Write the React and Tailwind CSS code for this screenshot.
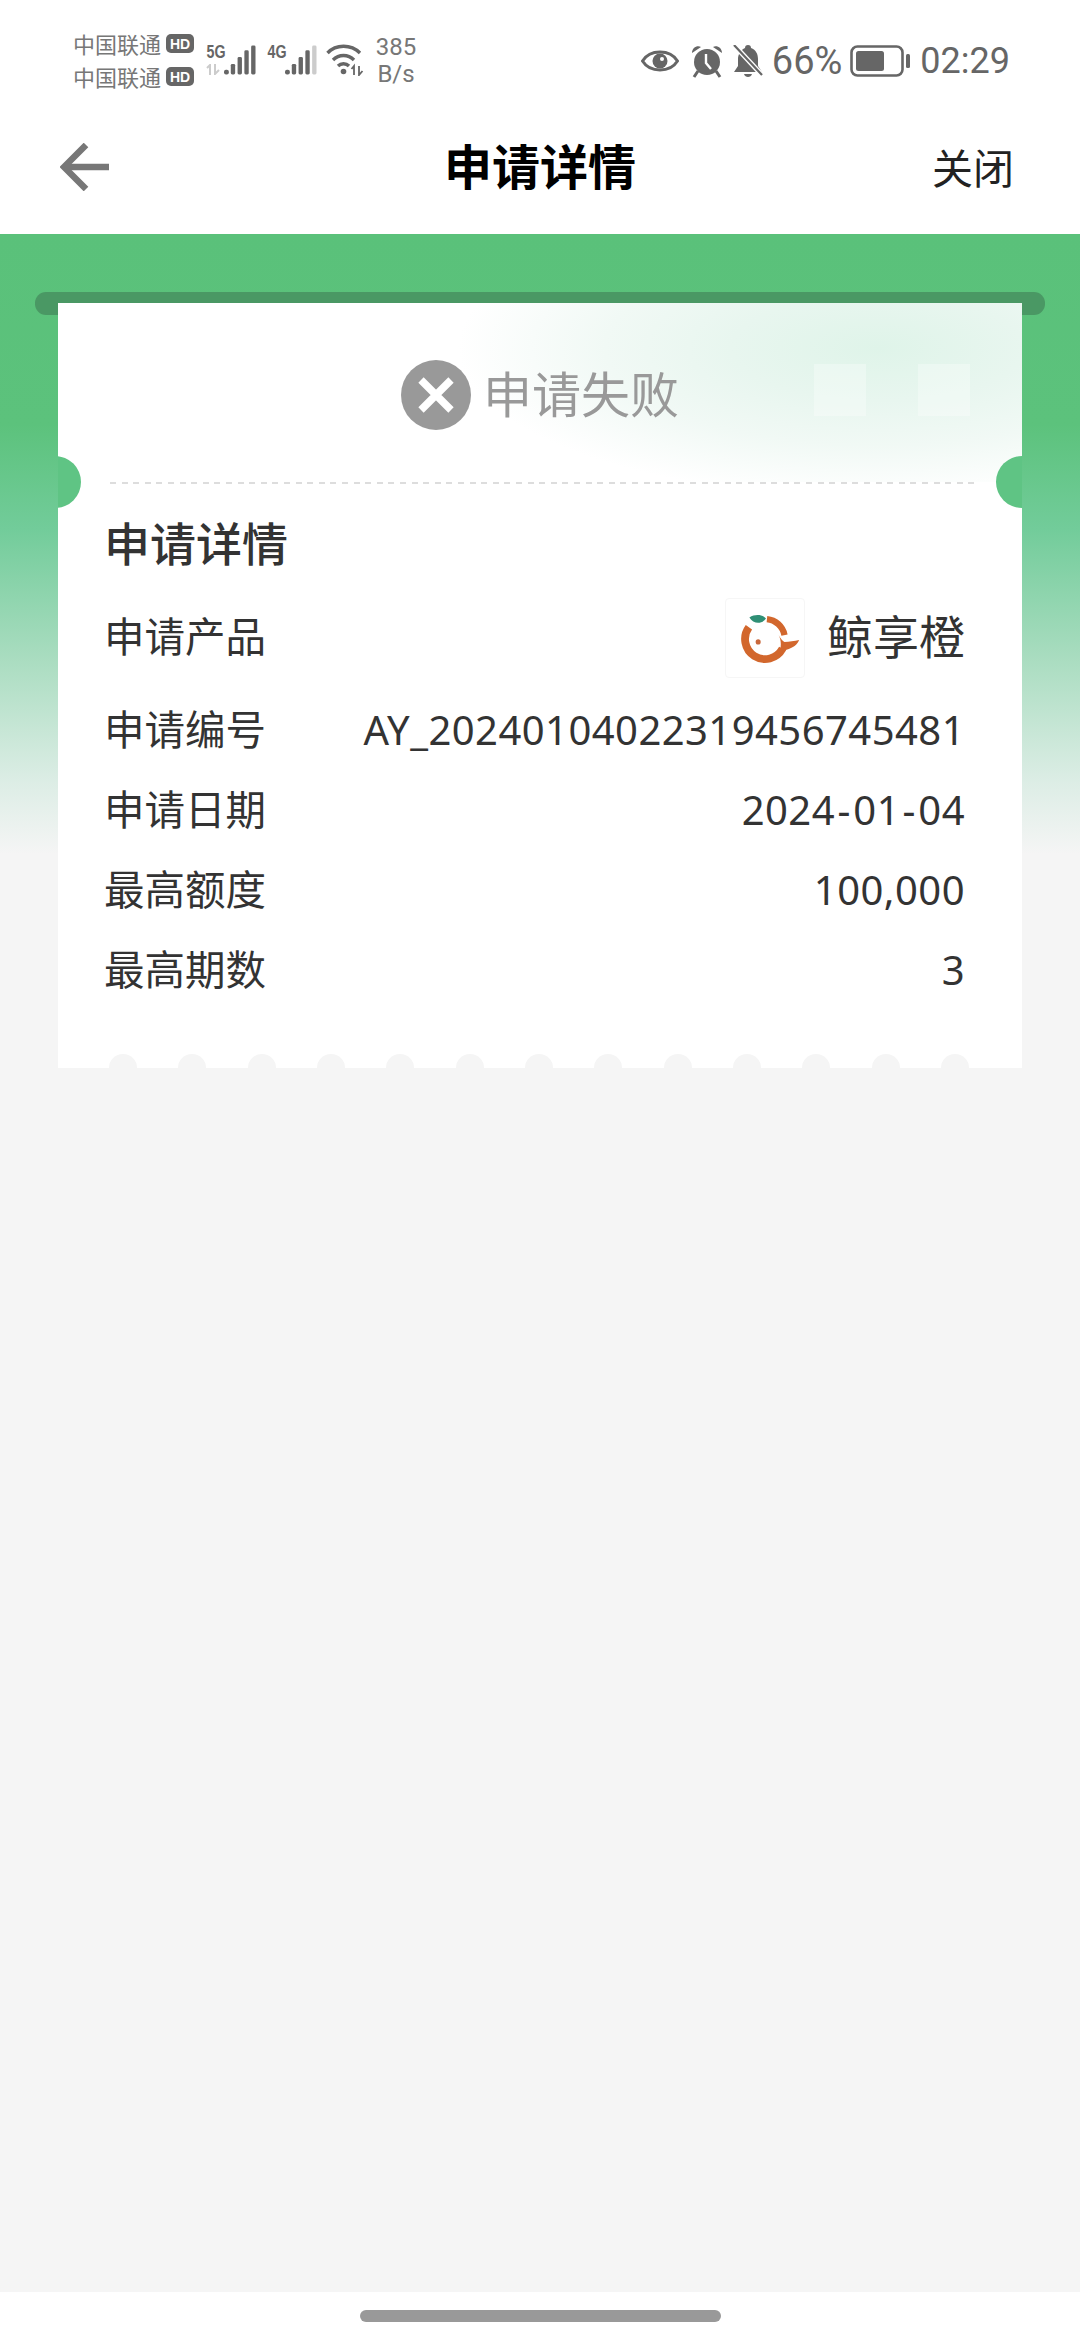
import React from "react";

const rows = [
  ["申请编号", "AY_20240104022319456745481"],
  [
    "申请日期",
    <>
      2024<span className="mx-[2.5px]">-</span>01<span className="mx-[2.5px]">-</span>04
    </>,
  ],
  ["最高额度", "100,000"],
  ["最高期数", "3"],
];

function Bars({ last = "#666" }) {
  return (
    <svg width="33" height="30" viewBox="0 0 33 30" fill="#666">
      <rect x="0" y="25" width="5" height="5" rx="2" />
      <rect x="7" y="19" width="4.5" height="11" rx="1.5" />
      <rect x="14" y="12" width="4.5" height="18" rx="1.5" />
      <rect x="21" y="5" width="4.5" height="25" rx="1.5" />
      <rect x="28" y="0" width="4.5" height="30" rx="1.5" fill={last} />
    </svg>
  );
}

function NetLabel({ children }) {
  return (
    <span className="w-[20px] scale-x-75 text-[19px] leading-[14px] font-bold font-['Liberation_Sans',sans-serif]">{children}</span>
  );
}

function Carrier() {
  return (
    <div className="flex h-[33px] items-center gap-[5px] text-[22px] leading-none text-[#777]">
      <span className="pb-[1px]">中国联通</span>
      <span className="flex h-[19px] w-[28px] items-center justify-center rounded-[5px] bg-[#666] text-[14px] leading-none font-bold text-white font-['Liberation_Sans',sans-serif]">
        HD
      </span>
    </div>
  );
}

function StatusBar() {
  return (
    <div className="flex h-[100px] justify-between bg-white pt-[27px] pr-[70px] pl-[73px] text-[#666]">
      <div className="flex h-[66px] items-center">
        <div className="flex flex-col">
          <Carrier />
          <Carrier />
        </div>
        <div className="relative mb-[1px] ml-[10px] flex h-[30px] w-[52px] items-start justify-between">
          <NetLabel>5G</NetLabel>
          <Bars />
          <svg className="absolute bottom-0 left-[2px]" width="14" height="11" viewBox="0 0 14 11" fill="none" stroke="#ccc" strokeWidth="2">
            <path d="M4 11 V1 L1 4 M9 0 V10 L13 6" />
          </svg>
        </div>
        <div className="mb-[1px] ml-[9px] flex h-[30px] w-[52px] items-start justify-between">
          <NetLabel>4G</NetLabel>
          <Bars last="#ccc" />
        </div>
        <svg className="mb-[1px] ml-[9px]" width="38" height="32" viewBox="0 0 38 32" fill="none" stroke="#666" strokeWidth="3.4">
          <path d="M1.5 9 C10 0 25 0 34 9" />
          <path d="M7 16 C13 10 22 10 28 16" />
          <path d="M12 22 C15 19 20 19 23 22" />
          <circle cx="17.5" cy="27.5" r="2.8" fill="#666" stroke="none" />
          <path d="M28 31 V22 L25.5 25 M33 22 V31 L36.5 27" stroke="#666" strokeWidth="1.8" />
        </svg>
        <div className="mt-[2px] ml-[11px] flex w-[42px] flex-col items-center text-[24px] leading-[27px] text-[#777] font-['Roboto',sans-serif]">
          <span>385</span>
          <span>B/s</span>
        </div>
      </div>
      <div className="flex h-[68px] items-center">
        <svg width="38" height="26" viewBox="0 0 38 26" fill="none">
          <path d="M1.5 13 C9 1 29 1 36.5 13 C29 25 9 25 1.5 13 Z" stroke="#666" strokeWidth="3" />
          <circle cx="19" cy="13" r="7.5" fill="#666" />
          <circle cx="21" cy="11" r="2" fill="#fff" />
        </svg>
        <svg className="ml-[12px]" width="32" height="33" viewBox="0 0 32 33" fill="#666">
          <circle cx="16" cy="17" r="13" />
          <path d="M1 8 C1 3 6 0 10 2 Z M31 8 C31 3 26 0 22 2 Z" />
          <path d="M7 26 L3 32 M25 26 L29 32" stroke="#666" strokeWidth="3" />
          <path d="M15 9 V18 L20 24" fill="none" stroke="#fff" strokeWidth="2.4" />
        </svg>
        <svg className="ml-[10px]" width="30" height="33" viewBox="0 0 30 33" fill="#666">
          <path d="M15 0 C17 0 18 1 18 3 C23 5 25 9 25 14 V21 L29 27 H1 L5 21 V14 C5 9 8 5 12 3 C12 1 13 0 15 0 Z" />
          <path d="M11 29 H19 C18 33 12 33 11 29 Z" />
          <path d="M1 0 L29 30" stroke="#fff" strokeWidth="5" />
          <path d="M1 0 L29 30" stroke="#666" strokeWidth="2.2" />
        </svg>
        <span className="ml-[9px] text-[38px] leading-none text-[#666] font-['Roboto',sans-serif]">66%</span>
        <svg className="ml-[8px]" width="60" height="32" viewBox="0 0 60 32" fill="#666">
          <rect x="1.5" y="1.5" width="51" height="29" rx="6" fill="none" stroke="#666" strokeWidth="2.6" />
          <rect x="6" y="6" width="28" height="20" rx="2.5" />
          <rect x="56" y="9" width="4" height="14" rx="1.5" />
        </svg>
        <span className="ml-[10px] text-[36px] leading-none text-[#666] font-['Roboto',sans-serif]">02:29</span>
      </div>
    </div>
  );
}

function NavBar() {
  return (
    <div className="relative flex h-[134px] items-center justify-between bg-white pr-[66px] pl-[60px]">
      <svg width="50" height="48" viewBox="0 0 50 48" fill="none" stroke="#777" strokeWidth="6.5">
        <path d="M26 2 L4 24 L26 46" />
        <path d="M4 24 H49" />
      </svg>
      <h1 className="absolute inset-x-0 pb-[6px] text-center text-[48px] leading-none font-bold text-black">申请详情</h1>
      <span className="pb-[2px] text-[41px] leading-none text-[#222]">关闭</span>
    </div>
  );
}

function OrangeLogo() {
  return (
    <div className="flex h-[80px] w-[80px] items-center justify-center rounded-[4px] border border-[#f6f6f6] bg-white">
      <svg width="80" height="80" viewBox="0 0 80 80">
        <path d="M23.5 29 A20.5 20.5 0 1 0 58 51" fill="none" stroke="#d2672d" strokeWidth="8" />
        <path d="M42 20.6 A20.5 20.5 0 0 1 60 37" fill="none" stroke="#d2672d" strokeWidth="6.5" />
        <path d="M24 19 C30 15 38 16 41 20 C37 26 28 26 24 19 Z" fill="#2f8f75" />
        <path d="M54 37 C56 41 58 43 60 44 C65 44 70 43 75 42 C73 47 69 50 62 52 C60 55 57 56 54 56 C57 50 57 43 54 37 Z" fill="#d2672d" />
        <circle cx="33" cy="44" r="2.6" fill="#c9683c" />
      </svg>
    </div>
  );
}

function Ticket() {
  return (
    <div className="relative mx-[58px] mt-[69px]">
      {/* slot the ticket slides out of */}
      <div className="absolute -top-[11px] -right-[23px] -left-[23px] h-[23px] rounded-[11px] bg-[#4a9864]" />
      <div className="relative h-[765px] bg-white text-[#333]">
        <div className="relative flex h-[179px] items-center justify-center bg-[radial-gradient(ellipse_420px_150px_at_820px_45px,#dff4e9_0%,#e8f6ef_35%,#f1f9f5_65%,#ffffff_100%)]">
          <div className="absolute top-[61px] left-[756px] h-[52px] w-[52px] bg-white/30" />
          <div className="absolute top-[61px] left-[860px] h-[52px] w-[52px] bg-white/30" />
          <div className="flex items-center gap-[12px]">
            <svg className="mt-[4px]" width="70" height="70" viewBox="0 0 70 70">
              <circle cx="35" cy="35" r="35" fill="#999" />
              <path d="M20 20 L50 50 M50 20 L20 50" stroke="#fff" strokeWidth="7.5" />
            </svg>
            <span className="pb-[2px] text-[49px] leading-none text-[#999]">申请失败</span>
          </div>
        </div>
        <div className="mr-[42px] ml-[52px] h-[2px] bg-[repeating-linear-gradient(90deg,#ddd_0_6px,transparent_6px_11.6px)]" />
        <div className="absolute top-[153px] -left-[29px] h-[52px] w-[52px] rounded-full bg-[#5fc484] [clip-path:inset(0_0_0_29px)]" />
        <div className="absolute top-[153px] -right-[26px] h-[52px] w-[52px] rounded-full bg-[#5fc484] [clip-path:inset(0_26px_0_0)]" />

        <div className="pr-[57px] pl-[46px]">
          <h2 className="flex h-[114px] items-center text-[46px] leading-none font-medium">申请详情</h2>
          <div className="flex h-[80px] items-center justify-between text-[40.5px]">
            <span className="pb-[6px] leading-none">申请产品</span>
            <div className="flex items-center gap-[22px]">
              <OrangeLogo />
              <span className="pb-[8px] text-[46px] leading-none">鲸享橙</span>
            </div>
          </div>
          <div className="mt-[13px]">
            {rows.map(([label, value]) => (
              <div key={label} className="flex h-[80px] items-center justify-between text-[40.5px]">
                <span className="pb-[6px] leading-none">{label}</span>
                <span className="pb-[3px] text-[40px] leading-none tracking-[0.45px] font-['Noto_Sans',sans-serif]">{value}</span>
              </div>
            ))}
          </div>
        </div>

        <div className="absolute right-[53px] bottom-0 left-[51px] flex h-[14px] justify-between overflow-hidden">
          {Array.from({ length: 13 }).map((_, i) => (
            <div key={i} className="h-[28px] w-[28px] shrink-0 rounded-full bg-[#f5f5f5]" />
          ))}
        </div>
      </div>
    </div>
  );
}

export default function App() {
  return (
    <div className="flex h-[2340px] w-[1080px] flex-col overflow-hidden bg-white font-['Noto_Sans_CJK_SC','Noto_Sans',sans-serif]">
      <StatusBar />
      <NavBar />
      <main className="flex-1 bg-[linear-gradient(180deg,#5ac17a_0px,#5cc27c_190px,#72cc9a_295px,#a8dcbf_421px,#dcede5_547px,#f5f5f5_620px)]">
        <Ticket />
      </main>
      <div className="flex h-[48px] items-start justify-center bg-white pt-[18px]">
        <div className="h-[12px] w-[361px] rounded-full bg-[#999]" />
      </div>
    </div>
  );
}
